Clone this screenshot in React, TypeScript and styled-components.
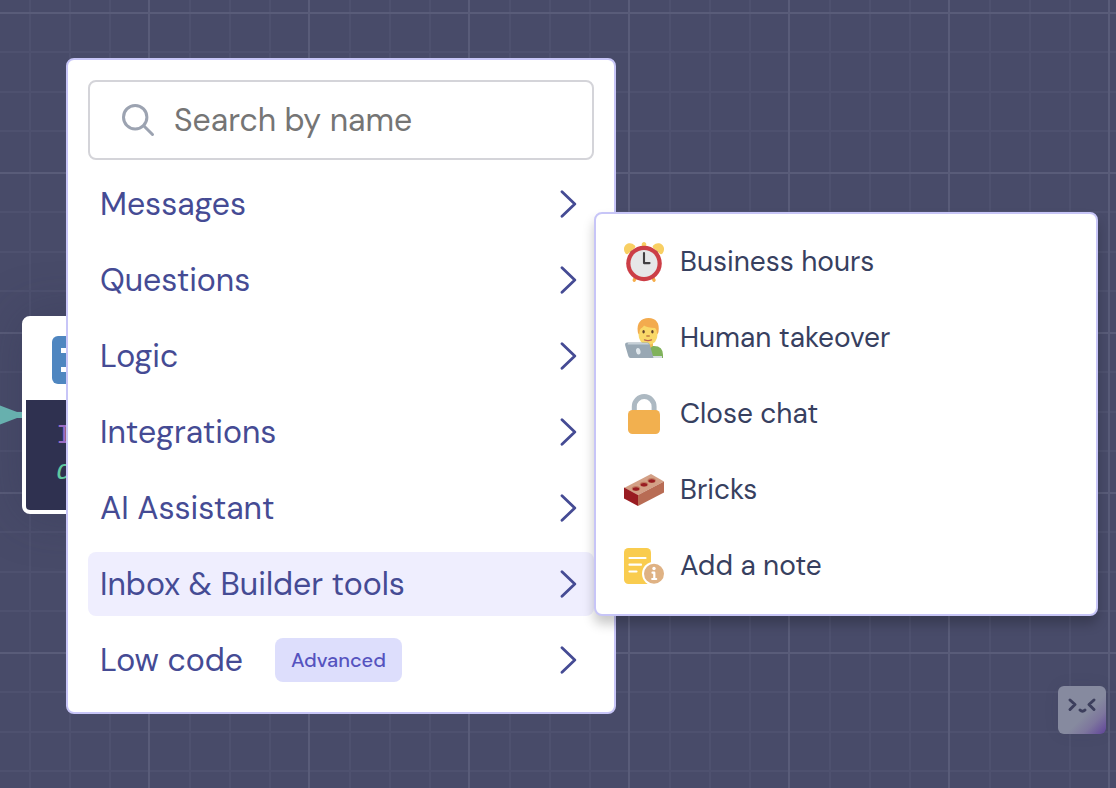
import React from "react";
import styled, { createGlobalStyle } from "styled-components";

const GlobalStyle = createGlobalStyle`
  *, *::before, *::after { box-sizing: border-box; }
  body { margin: 0; font-family: "DM Sans", Inter, "Liberation Sans", sans-serif; }
  button, input { font: inherit; }
`;

const Canvas = styled.main`
  position: relative;
  min-height: 100vh;
  overflow: hidden;
  background-color: #484b69;
  background-image:
    linear-gradient(90deg, #595c79 2px, transparent 2px),
    linear-gradient(#595c79 2px, transparent 2px),
    linear-gradient(90deg, transparent 41px, #4e516f 41px 43px, transparent 43px 81px, #4e516f 81px 83px, transparent 83px 121px, #4e516f 121px 123px, transparent 123px),
    linear-gradient(transparent 39px, #4e516f 39px 41px, transparent 41px 79px, #4e516f 79px 81px, transparent 81px 118px, #4e516f 118px 120px, transparent 120px);
  background-size: 160px 160px;
  background-position: 148px 12px;
`;

const Connector = styled.svg`
  position: absolute;
  left: 0;
  top: 402px;
`;

const Node = styled.article`
  position: absolute;
  left: 22px;
  top: 316px;
  width: 320px;
  border: 4px solid #fff;
  border-radius: 8px;
  background: #fff;
  box-shadow: 0 0 50px rgba(47, 49, 80, 0.35);
  overflow: hidden;
`;

const NodeHeader = styled.header`
  display: flex;
  height: 80px;
  padding: 16px 26px;
`;

const NodeBody = styled.div`
  height: 110px;
  padding: 18px 30px;
  background: #2f3150;
  font: 28px/36px "Liberation Mono", monospace;
`;

const CodeLine = styled.div<{ $tone: string; $italic?: boolean }>`
  color: ${(p) => p.$tone};
  font-style: ${(p) => (p.$italic ? "italic" : "normal")};
`;

const Menu = styled.section`
  position: absolute;
  left: 66px;
  top: 58px;
  width: 550px;
  padding: 20px;
  border: 2px solid #c7c5f7;
  border-radius: 8px;
  background: #fff;
`;

const SearchBox = styled.label`
  display: flex;
  align-items: center;
  gap: 18px;
  height: 80px;
  margin-bottom: 12px;
  padding: 0 30px;
  border: 2px solid #d4d4d9;
  border-radius: 8px;
`;

const SearchInput = styled.input`
  flex: 1;
  min-width: 0;
  padding: 0;
  border: 0;
  outline: 0;
  background: transparent;
  color: #454b94;
  font-size: 32px;
  line-height: 40px;
  &::placeholder { color: #757575; opacity: 1; }
`;

const List = styled.ul`
  display: flex;
  flex-direction: column;
  gap: 12px;
  margin: 0;
  padding: 0;
  list-style: none;
`;

const Category = styled.button<{ $active?: boolean }>`
  display: flex;
  align-items: center;
  width: 100%;
  height: 64px;
  padding: 0 17px 0 12px;
  border: 0;
  border-radius: 8px;
  background: ${(p) => (p.$active ? "#efeefe" : "transparent")};
  color: #454b94;
  font-size: 32px;
  line-height: 40px;
  text-align: left;
  white-space: nowrap;
  cursor: pointer;
  & > svg { margin-left: auto; }
`;

const Badge = styled.span`
  margin-left: 32px;
  padding: 0 16px;
  border-radius: 8px;
  background: #dddefc;
  color: #5553bf;
  font-size: 20px;
  font-weight: 500;
  line-height: 44px;
`;

const Submenu = styled.section`
  position: absolute;
  left: 594px;
  top: 212px;
  width: 504px;
  padding: 16px 8px;
  border: 2px solid #c7c5f7;
  border-radius: 8px;
  background: #fff;
  box-shadow: 0 8px 12px rgba(0, 0, 0, 0.22);
`;

const Tool = styled.button`
  display: flex;
  align-items: center;
  gap: 16px;
  width: 100%;
  height: 64px;
  padding: 0 20px;
  border: 0;
  border-radius: 8px;
  background: transparent;
  color: #37405f;
  font-size: 28px;
  line-height: 36px;
  white-space: nowrap;
  cursor: pointer;
`;

const Assistant = styled.button`
  position: absolute;
  right: 10px;
  top: 686px;
  width: 48px;
  height: 48px;
  padding: 0;
  border: 0;
  border-radius: 6px;
  background: linear-gradient(135deg, #868a9f 58%, #7d769d 76%, #60439a 100%);
  box-shadow: 0 0 16px rgba(50, 50, 80, 0.08);
  cursor: pointer;
  & > svg { display: block; }
`;

const Chevron = () => (
  <svg width="18" height="28" viewBox="0 0 18 28" fill="none" stroke="#454b94" strokeWidth="2.8" strokeLinecap="round" strokeLinejoin="round" aria-hidden="true">
    <path d="M3 1.8 15.8 14 3 26.2" />
  </svg>
);

const SearchIcon = () => (
  <svg width="36" height="36" viewBox="0 0 36 36" fill="none" stroke="#9ca3b1" strokeWidth="3" strokeLinecap="round" aria-hidden="true">
    <circle cx="15.200" cy="15.200" r="11.700" />
    <path d="M23.700 23.700 32.500 32.500" />
  </svg>
);

const ClockIcon = () => (
  <svg width="40" height="40" viewBox="0 0 36 36" aria-hidden="true">
    <path fill="#f8cf63" d="M20 6.042c0 1.112-.903 2.014-2 2.014s-2-.902-2-2.014V2.014C16 .901 16.903 0 18 0s2 .901 2 2.014v4.028z" />
    <path fill="#f6ad4b" d="M9.180 36c-.224 0-.452-.052-.666-.159-.736-.374-1.035-1.280-.667-2.027l8.940-18.127c.252-.512.768-.835 1.333-.835s1.081.323 1.333.835l8.941 18.127c.368.747.07 1.653-.666 2.027-.736.372-1.631.07-1.999-.676L18.121 19.740l-7.607 15.425c-.262.529-.788.835-1.334.835z" />
    <path d="M5.500 7.800 18 20 30.500 7.800" fill="none" stroke="#58595B" strokeWidth="2" />
    <path fill="#f8cf63" d="M31.500 9.800c1.400 1.500 2.300 1.600 3.300.3 1.900-2.900 1.500-5.800-.5-7.600C31.900.5 28.600.8 26.500 3c-1.100 1.200-1 1.900.4 2.800zM4.500 9.800c-1.400 1.500-2.300 1.600-3.300.3C-.7 7.200-.3 4.300 1.700 2.500 4.100.5 7.400.8 9.500 3c1.100 1.200 1 1.900-.4 2.800z" />
    <circle cx="18" cy="19.300" r="16" fill="#cc3e46" />
    <circle cx="18" cy="19.300" r="12.200" fill="#E6E7E8" />
    <path d="M18 10v9h5" fill="none" stroke="#414042" strokeWidth="1.900" strokeLinecap="round" strokeLinejoin="round" />
  </svg>
);

const HumanIcon = () => (
  <svg width="40" height="40" viewBox="0 0 40 40" aria-hidden="true">
    <path d="M20 40v-7q0-5 6-5h4q9 0 9 9v3z" fill="#80b25c" />
    <path d="M20 22h9v6q-4 4-9 1z" fill="#efbd57" />
    <path d="M14.500 12q0-8 9.500-8t9.500 8v4q0 10-9.500 11-9.500-1-9.500-11z" fill="#f9d868" />
    <path d="M13.800 14C12.500 5 17 0 24.500 0S36 5 34.500 14q-.3 2-1.500 2c0-4-1-5-2-6-5-.2-9-1-11-2.500-1 2-3 2.500-3.500 3.500-1 1-1 3-1.200 5-1 0-1.300-1-1.500-2z" fill="#f3ab4e" />
    <ellipse cx="19.600" cy="13.800" rx="1.200" ry="1.700" fill="#64432d" />
    <ellipse cx="28.400" cy="13.800" rx="1.200" ry="1.700" fill="#64432d" />
    <path d="M22.800 18h2.500" stroke="#c17b3f" strokeWidth="1.300" strokeLinecap="round" />
    <path d="M20.500 21.800q3.500 1.500 7 0" stroke="#bd624d" strokeWidth="1.300" strokeLinecap="round" fill="none" />
    <path d="M25 38h13v2H25z" fill="#d5dce1" />
    <path d="M3.300 24.500h20q1.800 0 2.400 2L29.500 40H6.500q-1.700 0-2.200-2L1.200 27.500q-.6-3 2.100-3z" fill="#99a8b4" />
    <path d="M4 25h19q1.500 0 2 1.400H3.500z" fill="#c6d0d7" />
    <ellipse cx="14.300" cy="33.200" rx="2.200" ry="3.300" transform="rotate(-12 14.300 33.200)" fill="#e1e8ed" />
  </svg>
);

const LockIcon = () => (
  <svg width="40" height="40" viewBox="0 0 40 40" aria-hidden="true">
    <path d="M10.300 22v-9.500a9.900 9.900 0 0 1 19.800 0V22" fill="none" stroke="#adb9c2" strokeWidth="5" />
    <rect x="4" y="16" width="32" height="24" rx="4.500" fill="#f2b04f" />
  </svg>
);

const BrickIcon = () => (
  <svg width="40" height="40" viewBox="0 0 40 40" aria-hidden="true">
    <path d="M0 18 27 4l13 7.500L14 25z" fill="#d3a086" />
    <path d="M0 17.500 14 25v11L0 28.500z" fill="#991c22" />
    <path d="M14 25 40 11.500v11L14 36z" fill="#b86c54" />
    {[[12, 18.5], [20, 14.3], [27.7, 10.5]].map(([x, y]) => (
      <g key={x}>
        <ellipse cx={x} cy={y} rx="4.200" ry="2.500" fill="#c17a60" />
        <ellipse cx={x} cy={y + 0.5} rx="3.300" ry="1.700" fill="#991c22" />
      </g>
    ))}
  </svg>
);

const NoteIcon = () => (
  <svg width="40" height="40" viewBox="0 0 40 40" aria-hidden="true">
    <rect x="0" y="2" width="27" height="36" rx="4.500" fill="#f9cc4f" />
    <path d="M5.500 12h16M5.500 18.700h11.500M5.500 25.500h7" stroke="#fff" strokeWidth="2.200" strokeLinecap="round" />
    <circle cx="30" cy="27.800" r="12" fill="#fff" />
    <circle cx="30" cy="27.800" r="10" fill="#dfb284" />
    <circle cx="30" cy="22.500" r="1.700" fill="#fff" />
    <path d="M28.500 26.700h1.800v6M28.200 33h4" fill="none" stroke="#fff" strokeWidth="2.200" strokeLinecap="round" strokeLinejoin="round" />
  </svg>
);

const categories: { name: string; badge?: string; active?: boolean }[] = [
  { name: "Messages" },
  { name: "Questions" },
  { name: "Logic" },
  { name: "Integrations" },
  { name: "AI Assistant" },
  { name: "Inbox & Builder tools", active: true },
  { name: "Low code", badge: "Advanced" },
];

const tools = [
  { name: "Business hours", Icon: ClockIcon },
  { name: "Human takeover", Icon: HumanIcon },
  { name: "Close chat", Icon: LockIcon },
  { name: "Bricks", Icon: BrickIcon },
  { name: "Add a note", Icon: NoteIcon },
];

export default function App() {
  return (
    <>
      <GlobalStyle />
      <Canvas>
        <Node>
          <NodeHeader>
            <svg width="48" height="48" viewBox="0 0 48 48" aria-hidden="true">
              <rect width="48" height="48" rx="6" fill="#4f86c0" />
              <path d="M9 12h30v5H9zM9 31h30v5H9z" fill="#fff" />
            </svg>
          </NodeHeader>
          <NodeBody>
            <CodeLine $tone="#9a6cc4">I</CodeLine>
            <CodeLine $tone="#5fc9a0" $italic>d</CodeLine>
          </NodeBody>
        </Node>
        <Connector width="22" height="26" viewBox="0 0 22 26" aria-hidden="true">
          <path d="M0 3.500 17 10h5v6h-5L0 22.500z" fill="#67b0ae" />
        </Connector>
        <Assistant type="button" aria-label="Assistant">
          <svg width="48" height="48" viewBox="0 0 48 48" fill="none" stroke="#3c3e5c" strokeWidth="3" strokeLinecap="round" strokeLinejoin="round" aria-hidden="true">
            <path d="m12 14 5 4.500-5 5M36 14l-5 4.500 5 5M22 24q2.500 2.500 5 0" />
          </svg>
        </Assistant>
        <Menu aria-label="Add block">
          <SearchBox>
            <SearchIcon />
            <SearchInput type="text" placeholder="Search by name" aria-label="Search by name" />
          </SearchBox>
          <List>
            {categories.map((c) => (
              <li key={c.name}>
                <Category type="button" $active={c.active}>
                  {c.name}
                  {c.badge && <Badge>{c.badge}</Badge>}
                  <Chevron />
                </Category>
              </li>
            ))}
          </List>
        </Menu>
        <Submenu aria-label="Inbox & Builder tools">
          <List>
            {tools.map(({ name, Icon }) => (
              <li key={name}>
                <Tool type="button">
                  <Icon />
                  {name}
                </Tool>
              </li>
            ))}
          </List>
        </Submenu>
      </Canvas>
    </>
  );
}
